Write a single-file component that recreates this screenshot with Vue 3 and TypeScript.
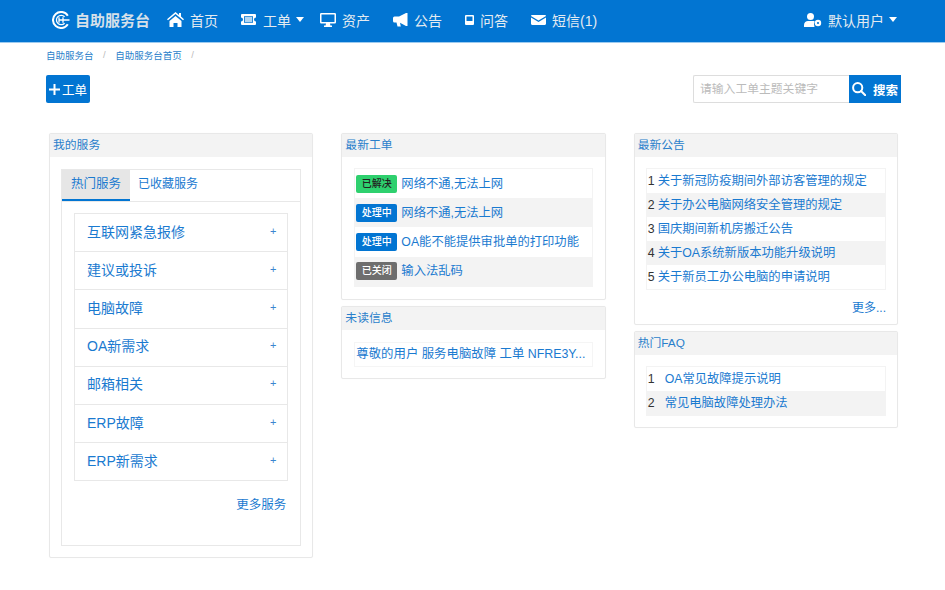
<script setup lang="ts">
const services: string[] = ['互联网紧急报修', '建议或投诉', '电脑故障', 'OA新需求', '邮箱相关', 'ERP故障', 'ERP新需求']
const tickets = [
  { s: '已解决', c: 'green', t: '网络不通,无法上网' },
  { s: '处理中', c: 'blue', t: '网络不通,无法上网' },
  { s: '处理中', c: 'blue', t: 'OA能不能提供审批单的打印功能' },
  { s: '已关闭', c: 'gray', t: '输入法乱码' },
]
const notices: string[] = ['关于新冠防疫期间外部访客管理的规定', '关于办公电脑网络安全管理的规定', '国庆期间新机房搬迁公告', '关于OA系统新版本功能升级说明', '关于新员工办公电脑的申请说明']
const faqs: string[] = ['OA常见故障提示说明', '常见电脑故障处理办法']
</script>

<template>
  <div class="page">
    <header class="nav">
      <div class="brand">
        <svg width="18" height="18" viewBox="0 0 18 18" fill="none" stroke="#fff"><path d="M15.800 4.800A8 8 0 1 0 15.800 13.200" stroke-width="2"/><path d="M12.600 5.800A4.700 4.700 0 1 0 12.600 12.200" stroke-width="1.300"/><path d="M6.800 9H17.500M7 6.300v5.400M11 6.300v5.400" stroke-width="1.300"/></svg>
        <span>自助服务台</span>
      </div>
      <a class="item i-home">
        <svg width="17" height="15" viewBox="0 0 17 15" fill="#fff"><path d="M8.500 0 0 7.200l1 1.100L8.500 2l7.500 6.300 1-1.100-3-2.600V1h-2v1.900zM2.500 9v6h4v-4h4v4h4V9l-6-5z"/></svg>
        <span>首页</span>
      </a>
      <a class="item i-ticket">
        <svg width="17" height="11" viewBox="0 0 17 11" fill="#fff"><path fill-rule="evenodd" d="M2 0h13a1 1 0 0 1 1 1v2.500a2 2 0 0 0 0 4V10a1 1 0 0 1-1 1H2a1 1 0 0 1-1-1V7.500a2 2 0 0 0 0-4V1a1 1 0 0 1 1-1zm2 2.200v6.600h9V2.200z"/><rect x="4.800" y="3" width="7.400" height="5" opacity=".7"/></svg>
        <span>工单</span><i class="caret"></i>
      </a>
      <a class="item i-desk">
        <svg width="16" height="14" viewBox="0 0 16 14" fill="#fff"><path fill-rule="evenodd" d="M1.200 0h13.600A1.200 1.200 0 0 1 16 1.200v8.100a1.200 1.200 0 0 1-1.200 1.200H10l.4 2H12V14H4v-1.500h1.600l.4-2H1.200A1.200 1.200 0 0 1 0 9.300V1.200A1.200 1.200 0 0 1 1.200 0zm.3 1.500v7.500h13V1.500z"/></svg>
        <span>资产</span>
      </a>
      <a class="item i-horn">
        <svg width="15" height="14" viewBox="0 0 15 14" fill="#fff"><path d="M13 0h1.500v13H13L7 9.800 7.800 13.500H4.500L3.500 9.500H1.500A1.500 1.500 0 0 1 0 8V5a1.500 1.500 0 0 1 1.500-1.500H6z"/></svg>
        <span>公告</span>
      </a>
      <a class="item i-book">
        <svg width="9" height="10" viewBox="0 0 9 10" fill="#fff"><path fill-rule="evenodd" d="M1 0h7a1 1 0 0 1 1 1v8a1 1 0 0 1-1 1H1a1 1 0 0 1-1-1V1a1 1 0 0 1 1-1zm.5 1.500V6h6V1.500z"/></svg>
        <span>问答</span>
      </a>
      <a class="item i-mail">
        <svg width="15" height="10" viewBox="0 0 15 10" fill="#fff"><path d="M1.200 0h12.600c.7 0 1.200.5 1.200 1L7.500 5.500 0 1C0 .5.500 0 1.200 0zM0 2.400V8.800C0 9.500.5 10 1.200 10h12.600c.7 0 1.200-.5 1.200-1.200V2.400L7.500 6.900z"/></svg>
        <span>短信(1)</span>
      </a>
      <a class="item user">
        <svg width="18" height="14" viewBox="0 0 18 14" fill="#fff"><circle cx="6.500" cy="3.500" r="3.500"/><path d="M0 14v-2c0-2.500 2-4 4-4h5c.6 0 1.200.1 1.700.4L10 11l.5 3z"/><circle cx="14" cy="10" r="3.200"/><circle cx="14" cy="10" r="1.100" fill="#0275d2"/></svg>
        <span>默认用户</span><i class="caret"></i>
      </a>
    </header>

    <nav class="crumbs">
      <a>自助服务台</a><em>/</em><a>自助服务台首页</a><em>/</em>
    </nav>

    <div class="toolbar">
      <button class="new">
        <svg width="11" height="11" viewBox="0 0 11 11" stroke="#fff" stroke-width="2"><path d="M5.500 0v11M0 5.500h11"/></svg>
        <span>工单</span>
      </button>
      <div class="search">
        <div class="input">请输入工单主题关键字</div>
        <button class="go">
          <svg width="14" height="14" viewBox="0 0 14 14" fill="none" stroke="#fff" stroke-width="2"><circle cx="5.700" cy="5.700" r="4.600"/><path d="M9 9l4.300 4.300" stroke-linecap="round"/></svg>
          <span>搜索</span>
        </button>
      </div>
    </div>

    <main class="cols">
      <section class="col">
        <div class="panel">
          <h3>我的服务</h3>
          <div class="body svc">
            <div class="tabs">
              <div class="tabhead">
                <a class="tab on">热门服务</a><a class="tab">已收藏服务</a>
              </div>
              <div class="tabbody">
                <ul class="svclist">
                  <li v-for="s in services" :key="s"><span>{{ s }}</span><i>+</i></li>
                </ul>
                <a class="moresvc">更多服务</a>
              </div>
            </div>
          </div>
        </div>
      </section>

      <section class="col">
        <div class="panel">
          <h3>最新工单</h3>
          <div class="body b2">
            <ul class="rows tk">
              <li v-for="(k, i) in tickets" :key="i">
                <span class="badge" :class="k.c">{{ k.s }}</span><a>{{ k.t }}</a>
              </li>
            </ul>
          </div>
        </div>
        <div class="panel">
          <h3>未读信息</h3>
          <div class="body b3">
            <div class="unread">尊敬的用户 服务电脑故障 工单 NFRE3Y...</div>
          </div>
        </div>
      </section>

      <section class="col">
        <div class="panel">
          <h3>最新公告</h3>
          <div class="body b4">
            <ul class="rows nt">
              <li v-for="(n, i) in notices" :key="n"><span class="no">{{ i + 1 }}</span><a>{{ n }}</a></li>
            </ul>
            <a class="morent">更多...</a>
          </div>
        </div>
        <div class="panel">
          <h3>热门FAQ</h3>
          <div class="body b5">
            <ul class="rows nt fq">
              <li v-for="(n, i) in faqs" :key="n"><span class="no">{{ i + 1 }}</span><a>{{ n }}</a></li>
            </ul>
          </div>
        </div>
      </section>
    </main>
  </div>
</template>

<style>
html, body { background: #fff; }
</style>

<style scoped>
.page { height: 590px; overflow: hidden; font-family: "Liberation Sans", "Noto Sans CJK SC", sans-serif; color: #333; font-size: 13px; }
a { color: #1a7ad0; }
ul { list-style: none; margin: 0; padding: 0; }
.nav { background: #0275d2; border-bottom: 1px solid #9ccbf0; display: flex; align-items: center; color: #e4ebf1; font-size: 14px; padding: 0 0 3px 52px; box-sizing: content-box; position: relative; height: 39px; }
.nav a { color: inherit; display: flex; align-items: center; }
.brand { display: flex; align-items: center; gap: 5px; font-size: 15px; font-weight: 700; width: 115px; color: #d6e0e9; }
.item { gap: 6px; }
.i-home { width: 73px; }
.i-ticket { width: 80px; }
.i-desk { width: 73px; }
.i-horn { width: 72px; }
.i-book { width: 66px; }
.caret { width: 0; height: 0; border-left: 4px solid transparent; border-right: 4px solid transparent; border-top: 5px solid #fff; margin-left: -1px; }
.nav .user { position: absolute; left: 804px; top: 0; height: 39px; }
.crumbs { height: 23px; padding-left: 46px; display: flex; align-items: center; font-size: 9.500px; }
.crumbs a { color: #2a7fcb; }
.crumbs em { font-style: normal; color: #bbb; margin: 0 9.500px; }
.toolbar { display: flex; justify-content: space-between; padding: 9px 44px 0 46px; height: 28px; }
.new { width: 44px; height: 28px; background: #0275d2; border: 0; border-radius: 2px; color: #fff; font: inherit; font-size: 12.500px; padding: 0 0 0 3px; display: flex; align-items: center; gap: 2px; }
.search { display: flex; }
.input { width: 156px; box-sizing: border-box; height: 28px; border: 1px solid #ddd; border-right: 0; color: #bbb; font-size: 11.800px; line-height: 26px; padding-left: 6px; border-radius: 2px 0 0 2px; }
.go { width: 52px; height: 28px; background: #0275d2; border: 0; color: #fff; font: inherit; font-weight: 700; font-size: 12.500px; padding: 0 0 0 3px; display: flex; align-items: center; gap: 7px; }
.cols { display: grid; grid-template-columns: repeat(3, 1fr); gap: 28px; padding: 30px 47px 0 49px; align-items: start; }
.col { display: flex; flex-direction: column; gap: 6px; min-width: 0; }
.panel { border: 1px solid #e8e8e8; border-radius: 2px; box-shadow: 0 0 1px rgba(0,0,0,.05); }
.panel h3 { margin: 0; height: 23px; line-height: 22px; background: #f3f3f3; font-size: 11.800px; font-weight: 400; color: #2a7fcb; padding-left: 3px; }
.svc { padding: 12px 11px 11px 11px; }
.tabs { border: 1px solid #e8e8e8; height: 377px; box-sizing: border-box; }
.tabhead { height: 31px; border-bottom: 1px solid #e8e8e8; display: flex; }
.tab { width: 68px; box-sizing: border-box; height: 31px; line-height: 28px; text-align: center; font-size: 12.500px; }
.tab + .tab { width: 76px; text-align: left; padding-left: 8px; font-size: 12px; }
.tab.on { background: #e6e6e6; border-bottom: 2px solid #0275d2; }
.tabbody { padding: 11px 12px 0; }
.svclist { border: 1px solid #e8e8e8; }
.svclist li { height: 33.200px; padding: 0 11px 4px 12px; border-bottom: 1px solid #e8e8e8; display: flex; justify-content: space-between; align-items: center; color: #1a7ad0; font-size: 14px; }
.svclist li:last-child { border-bottom: 0; }
.svclist i { font-style: normal; font-size: 11px; color: #3b86cf; }
.moresvc { display: block; text-align: right; font-size: 12.500px; margin-top: 13px; padding-right: 2px; }
.b2 { padding: 11px 12px 12px; }
.rows { border: 1px solid #f3f3f3; }
.rows li:nth-child(even) { background: #f3f3f3; }
.tk li { height: 29.200px; display: flex; align-items: center; padding-left: 1px; font-size: 12.300px; }
.tk a { margin-bottom: 2px; }
.badge { width: 41px; height: 18px; line-height: 18px; text-align: center; font-size: 10px; font-weight: 500; border-radius: 2px; margin-right: 4px; color: #fff; flex: none; }
.badge.green { background: #2ed06e; color: #222; }
.badge.blue { background: #0275d2; }
.badge.gray { background: #6e6e6e; }
.b3 { padding: 12px 12px 0; height: 36px; box-sizing: content-box; }
.unread { height: 23px; line-height: 22px; border: 1px solid #f5f5f5; padding-left: 1px; font-size: 12.400px; color: #1a7ad0; white-space: nowrap; overflow: hidden; }
.b4 { padding: 11px 11px 9px; }
.nt li { height: 24px; box-sizing: border-box; line-height: 20px; padding-top: 2px; display: flex; align-items: baseline; font-size: 12.300px; }
.no { color: #333; margin: 0 1px; width: 9px; flex: none; }
.morent { display: block; text-align: right; margin-top: 11px; font-size: 12px; height: 14px; line-height: 14px; }
.b5 { padding: 11px; }
.fq .no { margin-right: 8px; }
</style>
